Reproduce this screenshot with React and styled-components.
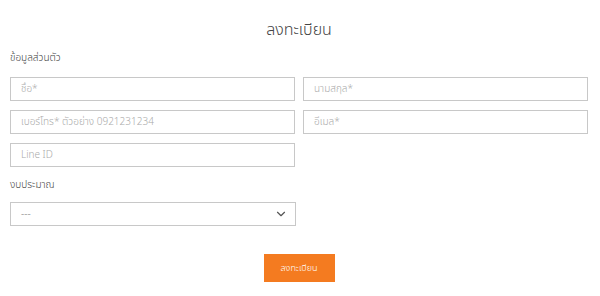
import React from 'react';
import styled, { createGlobalStyle } from 'styled-components';
import { FiChevronDown } from 'react-icons/fi';

const Global = createGlobalStyle`
    body {
        margin: 0;
        background: #fff;
        font-family: "Noto Sans Thai", "Noto Sans Thai UI", Loma, "Noto Sans", "Open Sans", sans-serif;
    }
`;

export default function App() {
    return (
        <>
            <Global />
            <Page>
                <Title>ลงทะเบียน</Title>
                <Section>ข้อมูลส่วนตัว</Section>
                <Grid>
                    <Field placeholder="ชื่อ*" />
                    <Field placeholder="นามสกุล*" />
                    <Field placeholder="เบอร์โทร* ตัวอย่าง 0921231234" />
                    <Field placeholder="อีเมล*" />
                    <Field placeholder="Line ID" />
                </Grid>
                <Section $top={11}>งบประมาณ</Section>
                <Half>
                    <SelectBox>
                        <span>---</span>
                        <FiChevronDown />
                    </SelectBox>
                </Half>
                <Actions>
                    <Submit>ลงทะเบียน</Submit>
                </Actions>
            </Page>
        </>
    );
}

const Page = styled.div`
    width: 600px;
    height: 296px;
    box-sizing: border-box;
    padding: 19px 12px 0 10px;
    color: #333;
`;

const Title = styled.h1`
    margin: 0;
    text-align: center;
    font-size: 16px;
    font-weight: 300;
    line-height: 22px;
    color: #444;
`;

const Section = styled.div`
    margin-top: ${(p) => p.$top ?? 10}px;
    font-size: 10px;
    line-height: 14px;
    font-weight: 300;
    color: #444;
`;

const Grid = styled.div`
    display: grid;
    grid-template-columns: 1fr 1fr;
    column-gap: 8px;
    row-gap: 9px;
    margin-top: 12px;
`;

const Field = styled.input`
    height: 24px;
    box-sizing: border-box;
    border: 1px solid #c8c8c8;
    padding: 0 10px;
    font-family: inherit;
    font-size: 10px;
    font-weight: 300;
    outline: none;
    &::placeholder {
        color: #aaa;
    }
`;

const Half = styled.div`
    width: 286px;
    margin-top: 10px;
`;

const SelectBox = styled.div`
    height: 24px;
    box-sizing: border-box;
    border: 1px solid #c8c8c8;
    padding: 0 7px 0 10px;
    display: flex;
    align-items: center;
    justify-content: space-between;
    font-size: 10px;
    color: #aaa;
    svg {
        width: 14px;
        height: 14px;
        color: #555;
    }
`;

const Actions = styled.div`
    display: flex;
    justify-content: center;
    margin-top: 28px;
`;

const Submit = styled.button`
    width: 71px;
    height: 28px;
    border: none;
    background: #f47b20;
    color: #fff;
    font-family: inherit;
    font-size: 9px;
    font-weight: 300;
    cursor: pointer;
`;
